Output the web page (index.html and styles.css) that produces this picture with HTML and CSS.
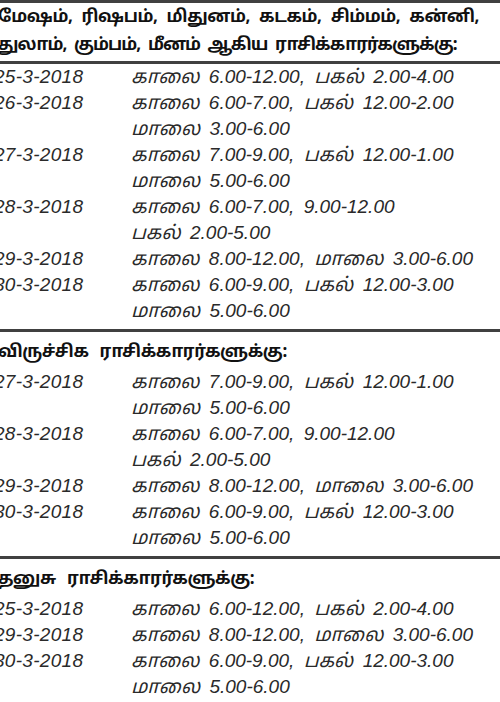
FILE: index.html
```html
<!DOCTYPE html>
<html lang="ta">
<head>
<meta charset="utf-8">
<link rel="stylesheet" href="styles.css">
</head>
<body>
<div class="page">
  <div class="rule top"></div>
  <h2 class="head"><span class="line">மேஷம், ரிஷபம், மிதுனம், கடகம், சிம்மம், கன்னி,</span><span class="line tight">துலாம், கும்பம், மீனம் ஆகிய ராசிக்காரர்களுக்கு:</span></h2>
  <div class="rule"></div>
  <div class="table">
    <div class="date">25-3-2018</div><div class="time">காலை 6.00-12.00, பகல் 2.00-4.00</div>
    <div class="date">26-3-2018</div><div class="time">காலை 6.00-7.00, பகல் 12.00-2.00<br>மாலை 3.00-6.00</div>
    <div class="date">27-3-2018</div><div class="time">காலை 7.00-9.00, பகல் 12.00-1.00<br>மாலை 5.00-6.00</div>
    <div class="date">28-3-2018</div><div class="time">காலை 6.00-7.00, 9.00-12.00<br>பகல் 2.00-5.00</div>
    <div class="date">29-3-2018</div><div class="time">காலை 8.00-12.00, மாலை 3.00-6.00</div>
    <div class="date">30-3-2018</div><div class="time">காலை 6.00-9.00, பகல் 12.00-3.00<br>மாலை 5.00-6.00</div>
  </div>
  <div class="rule"></div>
  <h2 class="head single">விருச்சிக ராசிக்காரர்களுக்கு:</h2>
  <div class="table">
    <div class="date">27-3-2018</div><div class="time">காலை 7.00-9.00, பகல் 12.00-1.00<br>மாலை 5.00-6.00</div>
    <div class="date">28-3-2018</div><div class="time">காலை 6.00-7.00, 9.00-12.00<br>பகல் 2.00-5.00</div>
    <div class="date">29-3-2018</div><div class="time">காலை 8.00-12.00, மாலை 3.00-6.00</div>
    <div class="date">30-3-2018</div><div class="time">காலை 6.00-9.00, பகல் 12.00-3.00<br>மாலை 5.00-6.00</div>
  </div>
  <div class="rule"></div>
  <h2 class="head single">தனுசு ராசிக்காரர்களுக்கு:</h2>
  <div class="table">
    <div class="date">25-3-2018</div><div class="time">காலை 6.00-12.00, பகல் 2.00-4.00</div>
    <div class="date">29-3-2018</div><div class="time">காலை 8.00-12.00, மாலை 3.00-6.00</div>
    <div class="date">30-3-2018</div><div class="time">காலை 6.00-9.00, பகல் 12.00-3.00<br>மாலை 5.00-6.00</div>
  </div>
</div>
</body>
</html>
```
FILE: styles.css
```css
html, body {
  margin: 0;
  padding: 0;
  background: #ffffff;
  overflow: hidden;
}
.page {
  width: 530px;
  margin-left: -6px;
  color: #1e1e1e;
}
.rule {
  height: 3px;
  background: #404040;
}
.head {
  margin: 0;
  padding: 1px 0 1px 4px;
  font-family: "Noto Sans Tamil", "Lohit Tamil", "Noto Sans", sans-serif;
  font-weight: bold;
  font-size: 17px;
  line-height: 28px;
  letter-spacing: -0.4px;
  word-spacing: 5px;
  white-space: nowrap;
  color: #111;
}
.line {
  display: block;
}
.line.tight {
  letter-spacing: -0.9px;
  word-spacing: 4px;
}
.head.single {
  padding: 7px 0 2px 4px;
  word-spacing: 7px;
}
.table {
  display: grid;
  grid-template-columns: 137px auto;
  padding: 0 0 5px 0;
  font-family: "Liberation Sans", Arial, sans-serif;
  font-style: italic;
  font-size: 19px;
  line-height: 26px;
  color: #2a2a2a;
  white-space: nowrap;
}
.date {
  letter-spacing: 0.3px;
}
.time {
  font-family: "Liberation Sans", "Noto Sans Tamil", "Lohit Tamil", sans-serif;
  word-spacing: 4px;
}
```
